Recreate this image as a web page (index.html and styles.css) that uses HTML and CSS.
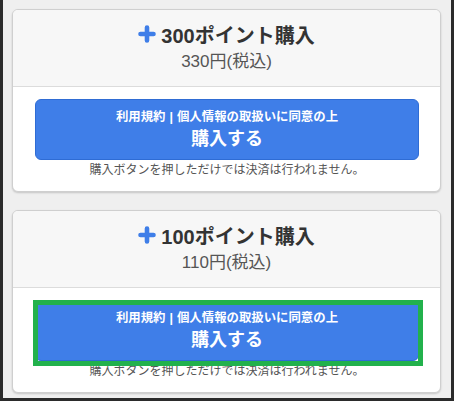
FILE: index.html
```html
<!DOCTYPE html>
<html lang="ja">
<head>
<meta charset="utf-8">
<link rel="stylesheet" href="styles.css">
</head>
<body>
<div class="frame">
  <div class="card">
    <div class="card-head">
      <div class="title"><svg class="plus" width="18" height="18" viewBox="0 0 18 18"><path d="M9 2.5v13M2.5 9h13" stroke="#3f7ee8" stroke-width="4.6" stroke-linecap="round" fill="none"/></svg><span>300ポイント購入</span></div>
      <div class="price">330円(税込)</div>
    </div>
    <div class="card-body">
      <div class="btn-wrap">
        <button class="buy-btn"><span class="btn-small">利用規約<span class="sep">|</span>個人情報の取扱いに同意の上</span><span class="btn-big">購入する</span></button>
      </div>
      <p class="note">購入ボタンを押しただけでは決済は行われません。</p>
    </div>
  </div>
  <div class="card">
    <div class="card-head">
      <div class="title"><svg class="plus" width="18" height="18" viewBox="0 0 18 18"><path d="M9 2.5v13M2.5 9h13" stroke="#3f7ee8" stroke-width="4.6" stroke-linecap="round" fill="none"/></svg><span>100ポイント購入</span></div>
      <div class="price">110円(税込)</div>
    </div>
    <div class="card-body">
      <div class="btn-wrap">
        <button class="buy-btn"><span class="btn-small">利用規約<span class="sep">|</span>個人情報の取扱いに同意の上</span><span class="btn-big">購入する</span></button>
        <div class="highlight"></div>
      </div>
      <p class="note">購入ボタンを押しただけでは決済は行われません。</p>
    </div>
  </div>
</div>
</body>
</html>
```
FILE: styles.css
```css
* { box-sizing: border-box; }
html, body { margin: 0; padding: 0; }
body {
  background: #2b2b2b;
  font-family: "Liberation Sans", "Noto Sans CJK JP", sans-serif;
  width: 454px;
  height: 401px;
  overflow: hidden;
}
.frame {
  margin: 0 3px 3px 3px;
  height: 398px;
  background: #efefef;
  padding: 9px 10px 0 9px;
  display: flex;
  flex-direction: column;
  gap: 18px;
  overflow: hidden;
}
.card {
  border: 1px solid #cfcfcf;
  border-radius: 6px;
  box-shadow: 0 1px 2px rgba(0,0,0,0.18);
  overflow: hidden;
  background: #fff;
  flex: none;
}
.card-head {
  background: #f7f7f7;
  border-bottom: 1px solid #dcdcdc;
  padding: 11px 0 11px;
  text-align: center;
}
.title {
  display: flex;
  justify-content: center;
  align-items: center;
  gap: 5px;
  height: 26px;
  font-size: 20px;
  font-weight: bold;
  color: #333;
}
.plus { display: block; }
.price {
  margin-top: 2px;
  height: 26px;
  line-height: 26px;
  font-size: 17px;
  color: #555;
}
.card-body {
  padding: 12px 21px 11px 22px;
}
.btn-wrap { position: relative; }
.buy-btn {
  display: flex;
  flex-direction: column;
  align-items: center;
  width: 100%;
  height: 61px;
  padding: 8px 0 0;
  margin: 0;
  background: #3f7ee8;
  border: 1px solid #2f6cd4;
  border-radius: 6px;
  color: #fff;
  font-family: "Liberation Sans", "Noto Sans CJK JP", sans-serif;
  font-weight: bold;
}
.btn-small {
  font-size: 12.4px;
  line-height: 18px;
}
.sep {
  padding: 0 4px;
}
.btn-big {
  font-size: 18px;
  line-height: 26px;
}
.note {
  margin: 0;
  text-align: center;
  font-size: 12px;
  line-height: 20px;
  color: #555;
}
.highlight {
  position: absolute;
  left: -2px;
  top: 0;
  width: 390px;
  height: 66px;
  border: 5px solid #22b14c;
}
```
